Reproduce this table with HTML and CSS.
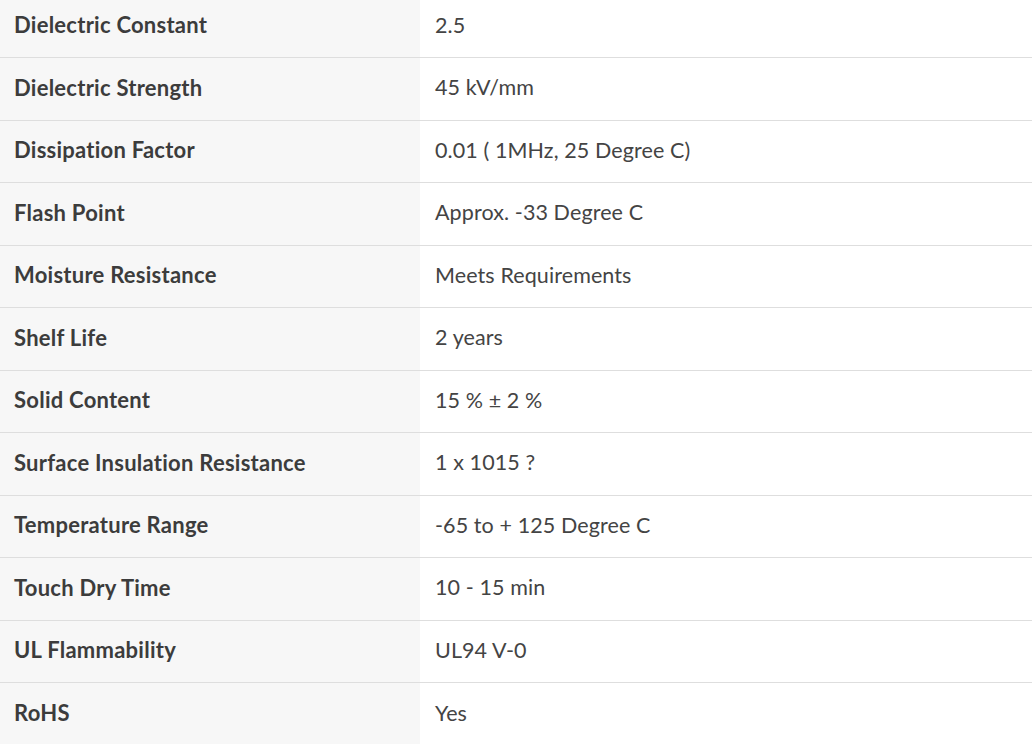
FILE: index.html
```html
<!DOCTYPE html>
<html>
<head>
<meta charset="utf-8">
<link rel="stylesheet" href="styles.css">
</head>
<body>
<div class="specs">
  <div class="row"><div class="key">Dielectric Constant</div><div class="val">2.5</div></div>
  <div class="row"><div class="key">Dielectric Strength</div><div class="val">45 kV/mm</div></div>
  <div class="row"><div class="key">Dissipation Factor</div><div class="val">0.01 ( 1MHz, 25 Degree C)</div></div>
  <div class="row"><div class="key">Flash Point</div><div class="val">Approx. -33 Degree C</div></div>
  <div class="row"><div class="key">Moisture Resistance</div><div class="val">Meets Requirements</div></div>
  <div class="row"><div class="key">Shelf Life</div><div class="val">2 years</div></div>
  <div class="row"><div class="key">Solid Content</div><div class="val">15 % ± 2 %</div></div>
  <div class="row"><div class="key">Surface Insulation Resistance</div><div class="val">1 x 1015 ?</div></div>
  <div class="row"><div class="key">Temperature Range</div><div class="val">-65 to + 125 Degree C</div></div>
  <div class="row"><div class="key">Touch Dry Time</div><div class="val">10 - 15 min</div></div>
  <div class="row"><div class="key">UL Flammability</div><div class="val">UL94 V-0</div></div>
  <div class="row last"><div class="key">RoHS</div><div class="val">Yes</div></div>
</div>
</body>
</html>
```
FILE: styles.css
```css
html, body {
  margin: 0;
  padding: 0;
  background: #fff;
  overflow: hidden;
}
.specs {
  margin-top: -4.5px;
  font-family: "Lato", "Open Sans", sans-serif;
  font-size: 22px;
  color: #444;
}
.row {
  display: grid;
  grid-template-columns: 420px 1fr;
  height: 62.5px;
  box-sizing: border-box;
  border-bottom: 1px solid #dedede;
}
.row.last {
  border-bottom: none;
}
.key {
  background: #f7f7f7;
  font-weight: 700;
  color: #3c3c3c;
  padding-left: 14px;
  padding-bottom: 3px;
  display: flex;
  align-items: center;
  letter-spacing: 0.25px;
}
.val {
  padding-left: 15px;
  padding-bottom: 3px;
  display: flex;
  align-items: center;
  color: #444;
  font-size: 21.5px;
  letter-spacing: 0.1px;
}
```
